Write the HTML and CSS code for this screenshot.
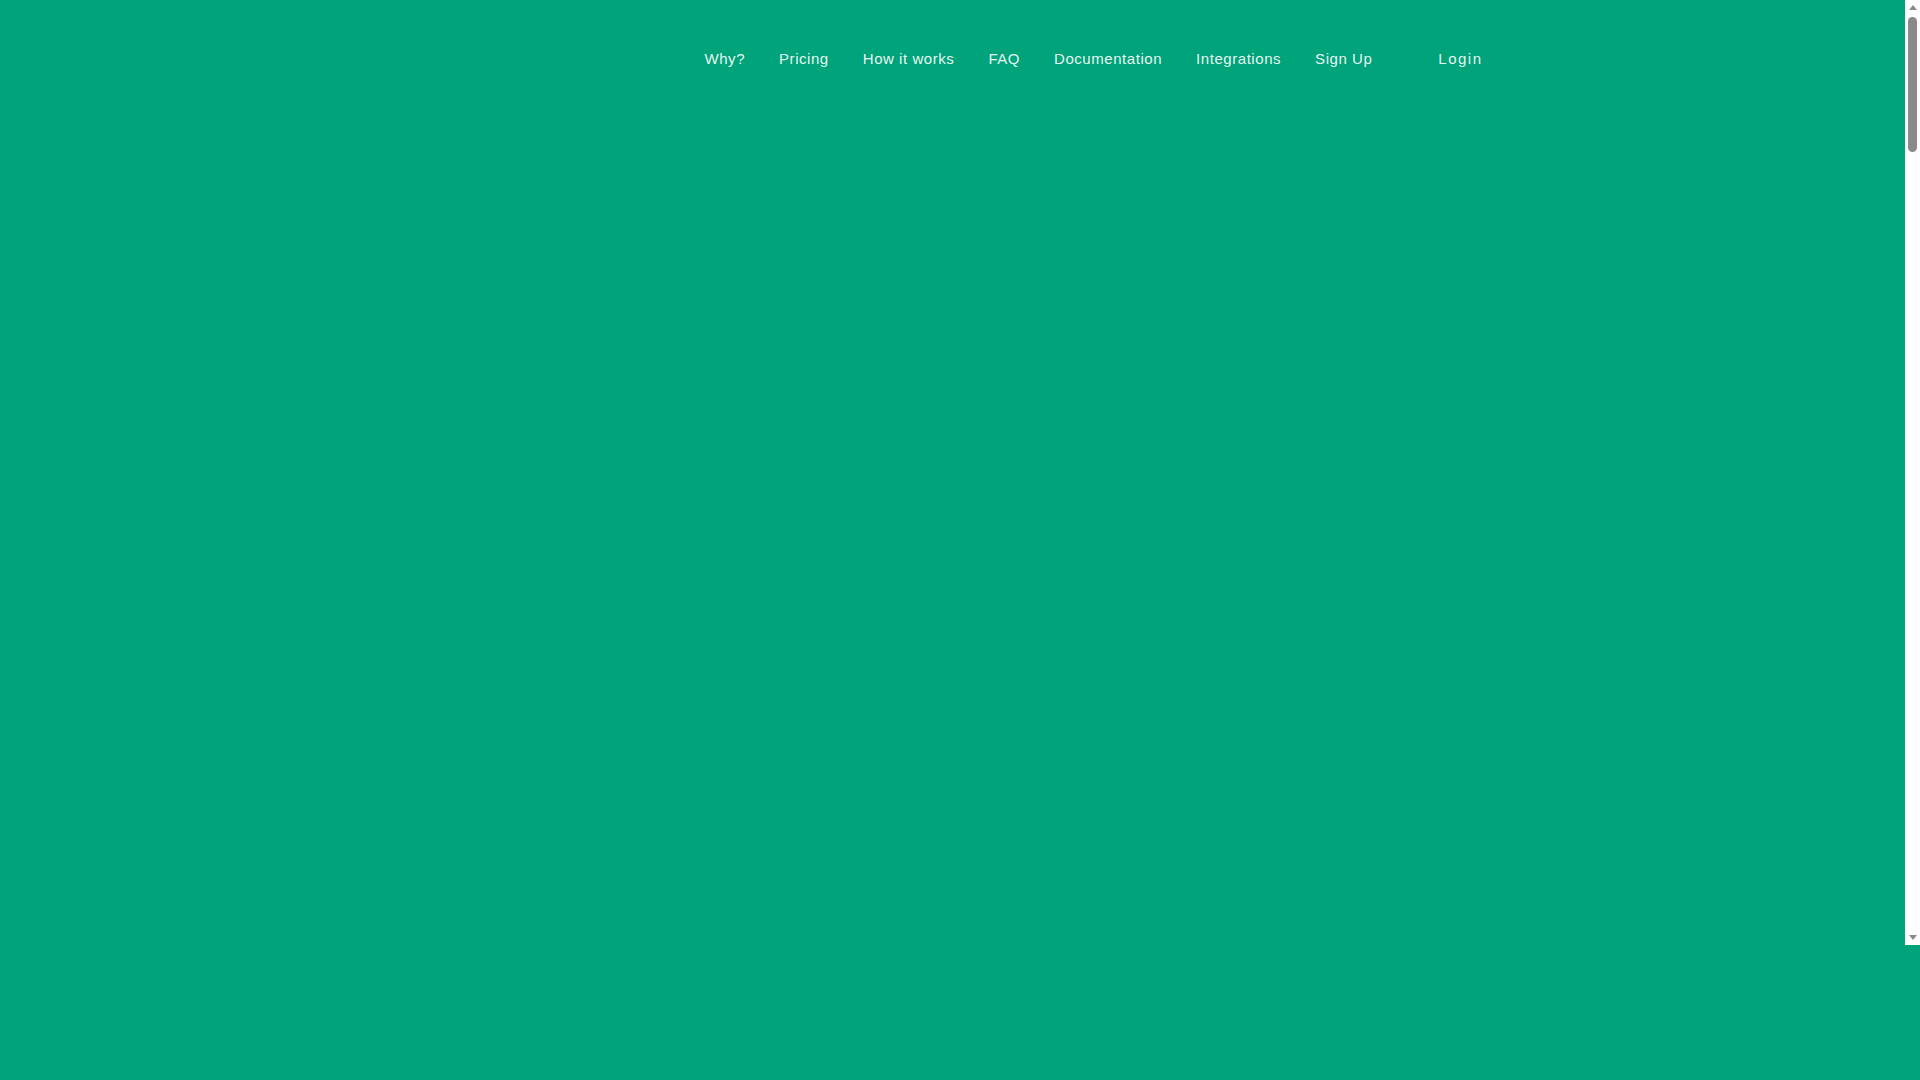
FILE: index.html
```html
<!DOCTYPE html>
<html>
  <head>
    <title>Home</title>
    <link rel="stylesheet" href="styles.css">
  </head>
  <body>
    <div class="viewport">
      <div class="page">
        <header class="header">
          <nav class="nav">
            <a href="#why">Why?</a>
            <a href="#pricing">Pricing</a>
            <a href="#how">How it works</a>
            <a href="#faq">FAQ</a>
            <a href="#docs">Documentation</a>
            <a href="#integrations">Integrations</a>
            <a href="#signup">Sign Up</a>
            <a href="#login" class="login">Login</a>
          </nav>
        </header>
      </div>

      <!-- page scrollbar -->
      <div class="scrollbar">
        <div class="arrow-box"><span class="arrow-up"></span></div>
        <div class="track">
          <div class="thumb"></div>
        </div>
        <div class="arrow-box"><span class="arrow-down"></span></div>
      </div>
    </div>
  </body>
</html>
```

FILE: styles.css
```css
html,
body {
  margin: 0;
  height: 100%;
  background-color: #00a37a;
}

body {
  font-family: "Liberation Sans", Arial, sans-serif;
  overflow: hidden;
}

.viewport {
  display: flex;
  height: 945px;
  background-color: #00a37a;
}

.page {
  flex: 1;
  overflow: hidden;
}

.header {
  padding-top: 50px;
}

.nav {
  display: flex;
  justify-content: flex-end;
  max-width: 1140px;
  margin: 0 auto;
  padding-right: 23px;
  box-sizing: border-box;
}

.nav a {
  padding: 0 17px;
  color: rgba(255, 255, 255, 0.93);
  text-decoration: none;
  font-size: 15px;
  line-height: 17px;
  letter-spacing: 0.55px;
}

.nav a.login {
  margin-left: 32px;
  letter-spacing: 1.5px;
}

.scrollbar {
  width: 15px;
  display: flex;
  flex-direction: column;
  background-color: #ffffff;
}

.arrow-box {
  height: 15px;
  display: flex;
  align-items: center;
  justify-content: center;
}

.arrow-up {
  width: 0;
  height: 0;
  border-left: 4px solid transparent;
  border-right: 4px solid transparent;
  border-bottom: 5px solid #8a8a8a;
}

.arrow-down {
  width: 0;
  height: 0;
  border-left: 4px solid transparent;
  border-right: 4px solid transparent;
  border-top: 5px solid #8a8a8a;
}

.track {
  flex: 1;
  display: flex;
  justify-content: center;
  padding-top: 2px;
}

.thumb {
  width: 9px;
  height: 135px;
  border-radius: 5px;
  background-color: #8a8a8a;
}
```
